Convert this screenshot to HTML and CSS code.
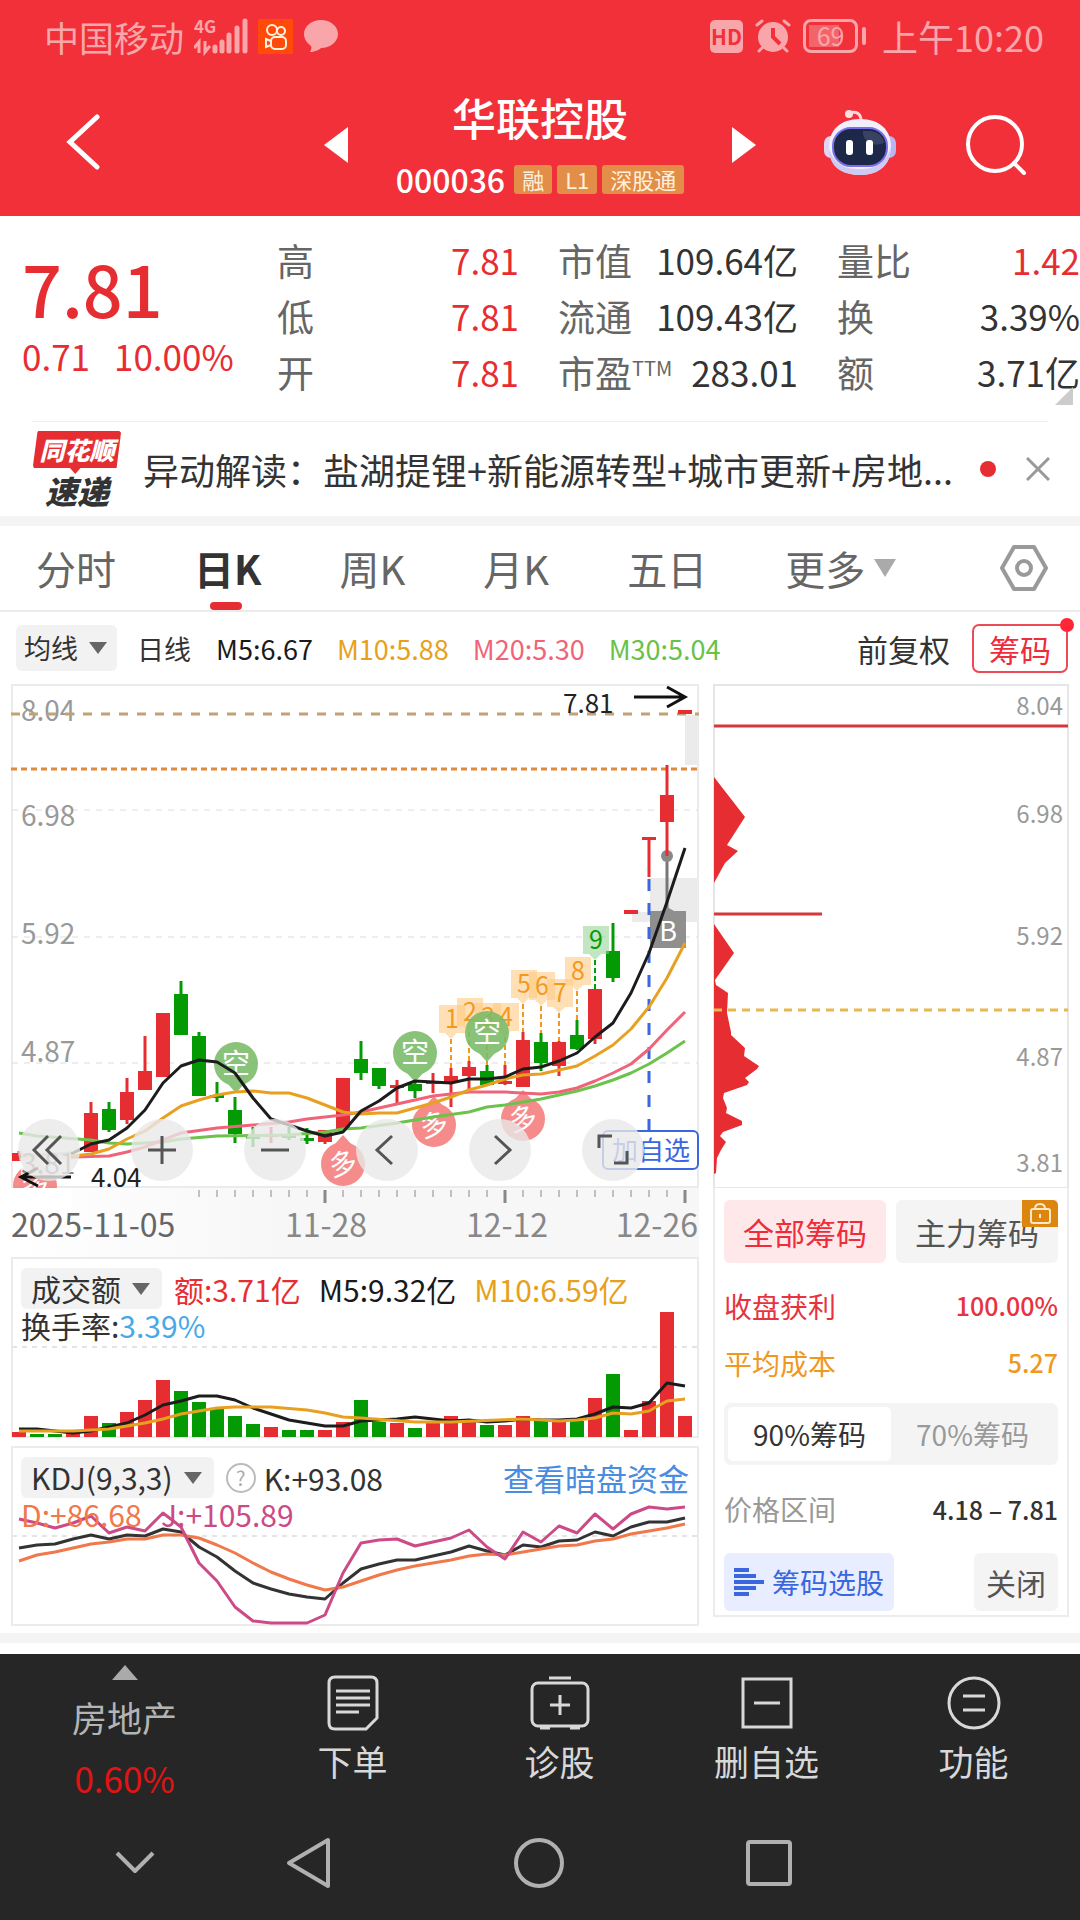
FILE: index.html
```html
<!DOCTYPE html>
<html lang="zh-CN">
  <head>
    <meta charset="UTF-8" />
    <meta name="viewport" content="width=device-width, initial-scale=1.0" />
    <title>华联控股 000036</title>
    <link rel="stylesheet" href="styles.css">
  </head>
  <body>
    <!-- Status bar -->
    <div class="status">
      <div class="status-side">
        <span>中国移动</span>
        <svg class="signal" viewBox="192 10 54 54" width="54" height="54">
          <text x="192" y="34" font-size="17" font-weight="700">4G</text>
          <path d="M197 54V43l-5 6M203 42v11l5-6" stroke-width="3" />
          <path d="M213 52v-4M220 52V43M227 52V36M235 52V29M243 52V22" stroke-width="5" stroke-linecap="round" />
        </svg>
        <svg viewBox="0 0 35 35" width="35" height="35">
          <path fill="#ff4a0a" d="M0 0h35v35H0z" />
          <g fill="none" stroke="#fff3dc" stroke-width="2">
            <circle cx="14" cy="11" r="5" /><circle cx="23" cy="12" r="4" />
            <rect x="13" y="18" width="15" height="12" rx="4" /><path d="M13 22l-5-2v8l5-2z" />
          </g>
        </svg>
        <svg viewBox="0 0 36 34" width="36" height="34">
          <path class="pale" d="M18 1c9 0 17 6 17 14s-8 14-17 14c-2 2-7 4-11 4 1-2 2-4 1-6-4-3-7-7-7-12C1 7 9 1 18 1z" />
        </svg>
      </div>
      <div class="status-side right">
        <span class="hd">HD</span>
        <svg viewBox="0 0 36 34" width="36" height="34">
          <g class="pale-line" fill="none" stroke-width="3" stroke-linecap="round">
            <path d="M2 6l5-4M34 6l-5-4M7 29l-3 3M29 29l3 3" />
          </g>
          <circle class="pale" cx="18" cy="18" r="15" />
          <path d="M18 9v9l7 7" fill="none" stroke="#f13039" stroke-width="4" />
        </svg>
        <span class="battery">69</span>
        <span class="clock">上午10:20</span>
      </div>
    </div>

    <!-- Title bar -->
    <div class="header">
      <button class="icon-btn back" aria-label="返回">
        <svg viewBox="0 0 34 56" width="34" height="56"><path d="M31 3L4 28l27 25" fill="none" stroke="#fff" stroke-width="5" stroke-linecap="round" /></svg>
      </button>
      <div class="stock-nav">
        <button class="icon-btn" aria-label="上一只"><svg viewBox="0 0 24 36" width="24" height="36"><path d="M24 0v36L0 18z" fill="#fff" /></svg></button>
        <div class="stock">
          <h1>华联控股</h1>
          <div class="stock-code">
            <span class="code">000036</span>
            <span class="tag">融</span>
            <span class="tag">L1</span>
            <span class="tag">深股通</span>
          </div>
        </div>
        <button class="icon-btn" aria-label="下一只"><svg viewBox="0 0 24 36" width="24" height="36"><path d="M0 0v36l24-18z" fill="#fff" /></svg></button>
      </div>
      <div class="header-right">
        <button class="icon-btn robot" aria-label="智能助手">
          <svg viewBox="0 0 74 70" width="74" height="70">
            <path d="M26 6q12-3 12 8" fill="none" stroke="#ffd6dc" stroke-width="3" />
            <circle cx="26" cy="7" r="4" fill="#ffdfe4" />
            <rect x="1" y="29" width="14" height="22" rx="7" fill="#dcd8f4" />
            <rect x="59" y="29" width="14" height="22" rx="7" fill="#b9b5f0" />
            <path d="M37 12c20 0 31 11 31 28S56 68 37 68 6 57 6 40s11-28 31-28z" fill="#f1effb" />
            <path d="M6 42c0 17 12 26 31 26s31-10 31-28c-6 18-16 22-31 22S12 58 6 42z" fill="#cfcaf3" />
            <rect x="10" y="21" width="54" height="38" rx="18" fill="#1d2748" stroke="#7b6fe8" stroke-width="2" />
            <path d="M40 24h8q12 2 13 12-10 4-16-1t-5-11z" fill="#3a4263" />
            <rect x="23" y="33" width="7" height="15" rx="3" fill="#fff" />
            <rect x="43" y="33" width="7" height="15" rx="3" fill="#fff" />
          </svg>
        </button>
        <button class="icon-btn" aria-label="搜索">
          <svg viewBox="0 0 62 62" width="62" height="62"><g fill="none" stroke="#fff" stroke-width="4" stroke-linecap="round"><circle cx="30" cy="30" r="27" /><path d="M49 49l10 10" /></g></svg>
        </button>
      </div>
    </div>

    <!-- Quote -->
    <div class="quote">
      <div class="price">
        <div class="price-now">7.81</div>
        <div class="price-change"><span>0.71</span><span>10.00%</span></div>
      </div>
      <dl class="stats">
        <div><dt>高</dt><dd class="up">7.81</dd></div>
        <div><dt>低</dt><dd class="up">7.81</dd></div>
        <div><dt>开</dt><dd class="up">7.81</dd></div>
      </dl>
      <dl class="stats">
        <div><dt>市值</dt><dd>109.64亿</dd></div>
        <div><dt>流通</dt><dd>109.43亿</dd></div>
        <div><dt>市盈<sup>TTM</sup></dt><dd>283.01</dd></div>
      </dl>
      <dl class="stats">
        <div><dt>量比</dt><dd class="up">1.42</dd></div>
        <div><dt>换</dt><dd>3.39%</dd></div>
        <div><dt>额</dt><dd>3.71亿</dd></div>
      </dl>
      <svg class="corner" viewBox="0 0 18 18" width="18" height="18"><path d="M18 0v18H0z" fill="#ccc" /></svg>
    </div>

    <!-- News line -->
    <div class="news">
      <div class="news-logo">
        <span class="logo-top">同花顺</span>
        <span class="logo-bottom">速递</span>
      </div>
      <a class="news-text" href="#">异动解读：盐湖提锂+新能源转型+城市更新+房地...</a>
      <span class="news-dot"></span>
      <button class="icon-btn" aria-label="关闭提示">
        <svg viewBox="0 0 24 24" width="24" height="24"><path d="M1 1l22 22M23 1L1 23" stroke="#999" stroke-width="3" /></svg>
      </button>
    </div>

    <!-- Period tabs -->
    <div class="tabs">
      <button class="tab">分时</button>
      <button class="tab active">日K</button>
      <button class="tab">周K</button>
      <button class="tab">月K</button>
      <button class="tab">五日</button>
      <button class="tab more">更多<svg viewBox="0 0 24 20" width="24" height="20"><path d="M1 1h22L12 19z" fill="#aaa" /></svg></button>
      <button class="icon-btn settings" aria-label="设置">
        <svg viewBox="0 0 48 48" width="48" height="48"><g fill="none" stroke="#999" stroke-width="4"><path d="M14 3h20l12 21-12 21H14L2 24z" stroke-linejoin="round" /><circle cx="24" cy="24" r="7" /></g></svg>
      </button>
    </div>

    <div class="averages">
      <button class="pick">均线<i class="caret"></i></button>
      <span class="period">日线</span>
      <span class="m5">M5:6.67</span>
      <span class="m10">M10:5.88</span>
      <span class="m20">M20:5.30</span>
      <span class="m30">M30:5.04</span>
      <button class="adjust">前复权</button>
      <button class="chip-btn">筹码</button>
    </div>

    <!-- Charts -->
    <div class="charts">
      <div class="left">
        <div class="kline">
          <svg id="kline" viewBox="11 684 688 573" role="img" aria-label="日K线图"></svg>
          <div class="tools">
            <button aria-label="最早"><svg viewBox="0 0 62 62"><path d="M30 17L16 31l14 14M43 17L29 31l14 14" /></svg></button>
            <button aria-label="放大"><svg viewBox="0 0 62 62"><path d="M17 31h28M31 17v28" /></svg></button>
            <button aria-label="缩小"><svg viewBox="0 0 62 62"><path d="M17 31h28" /></svg></button>
            <button aria-label="左移"><svg viewBox="0 0 62 62"><path d="M36 17L21 31l15 14" /></svg></button>
            <button aria-label="右移"><svg viewBox="0 0 62 62"><path d="M26 17l15 14-15 14" /></svg></button>
            <button aria-label="全屏"><svg viewBox="0 0 62 62"><path d="M17 29V17h13M45 32v12H32" /></svg></button>
          </div>
        </div>
        <div class="sub">
          <svg id="volume" viewBox="11 1257 688 181" role="img" aria-label="成交额"></svg>
          <div class="legend">
            <div class="legend-row">
              <button class="pick">成交额<i class="caret"></i></button>
              <span class="up">额:3.71亿</span>
              <span class="m5">M5:9.32亿</span>
              <span class="m10">M10:6.59亿</span>
            </div>
            <div class="legend-row second">换手率:<span class="rate">3.39%</span></div>
          </div>
        </div>
        <div class="sub">
          <svg id="kdj" viewBox="11 1446 688 181" role="img" aria-label="KDJ"></svg>
          <div class="legend">
            <div class="legend-row">
              <button class="pick">KDJ(9,3,3)<i class="caret"></i></button>
              <button class="help" aria-label="指标说明">?</button>
              <span>K:+93.08</span>
              <a class="link" href="#">查看暗盘资金</a>
            </div>
            <div class="legend-row second"><span class="d">D:+86.68</span><span class="j">J:+105.89</span></div>
          </div>
        </div>
      </div>

      <div class="right-panel">
        <svg id="chips" viewBox="713 684 356 504" role="img" aria-label="筹码分布"></svg>
        <div class="chip-info">
          <div class="chip-tabs">
            <button class="on">全部筹码</button>
            <button>主力筹码
              <span class="lock"><svg viewBox="0 0 36 27" width="36" height="27"><g fill="none" stroke="#ffe9c4" stroke-width="2"><rect x="9" y="9" width="19" height="14" rx="2" /><path d="M13 9q0-5 5-5t5 5M18 14v4" /></g></svg></span>
            </button>
          </div>
          <div class="chip-row red"><span>收盘获利</span><b>100.00%</b></div>
          <div class="chip-row orange"><span>平均成本</span><b>5.27</b></div>
          <div class="segment">
            <button class="on">90%筹码</button>
            <button>70%筹码</button>
          </div>
          <div class="chip-row range"><span>价格区间</span><b>4.18 – 7.81</b></div>
          <div class="chip-actions">
            <button class="select"><svg viewBox="0 0 30 30" width="30" height="30"><path d="M0 3h15M0 9h22M0 15h30M0 21h22M0 27h15" stroke="#3a66e0" stroke-width="4" /></svg>筹码选股</button>
            <button class="close">关闭</button>
          </div>
        </div>
      </div>
    </div>

    <!-- Bottom bar -->
    <div class="bottom">
      <div class="actions">
        <button class="sector">
          <svg viewBox="0 0 26 15" width="26" height="15"><path d="M13 0l13 15H0z" fill="#aaa" /></svg>
          <span>房地产</span>
          <span class="sector-rate">0.60%</span>
        </button>
        <button>
          <svg viewBox="0 0 60 56"><path d="M12 2h36q6 0 6 6v35L43 54H12q-6 0-6-6V8q0-6 6-6zM13 16h34M13 23h34M13 30h34M13 37h23" /></svg>
          <span>下单</span>
        </button>
        <button>
          <svg viewBox="0 0 60 56"><path d="M19 3h22" /><rect x="2" y="8" width="56" height="43" rx="6" /><path d="M30 20v20M20 30h20M10 53h10M40 53h10" /></svg>
          <span>诊股</span>
        </button>
        <button>
          <svg viewBox="0 0 60 56"><path d="M6 4h48v48H6zM17 28h26" /></svg>
          <span>删自选</span>
        </button>
        <button>
          <svg viewBox="0 0 60 56"><circle cx="30" cy="28" r="25" /><path d="M19 21h22M19 35h22" /></svg>
          <span>功能</span>
        </button>
      </div>
      <div class="system-nav">
        <button class="collapse" aria-label="收起"><svg viewBox="0 0 40 24" width="40" height="24"><path d="M2 2l18 18L38 2" /></svg></button>
        <button class="sys-back" aria-label="系统返回"><svg viewBox="0 0 46 52" width="46" height="52"><path d="M42 3v46L3 26z" /></svg></button>
        <button aria-label="主页"><svg viewBox="0 0 52 52" width="52" height="52"><circle cx="26" cy="26" r="23" /></svg></button>
        <button aria-label="最近任务"><svg viewBox="0 0 46 46" width="46" height="46"><rect x="2" y="2" width="42" height="42" rx="2" /></svg></button>
      </div>
    </div>

    <script src="charts.js"></script>
  </body>
</html>
```

FILE: styles.css
```css
* {
  box-sizing: border-box;
}
body {
  margin: 0;
  min-height: 100vh;
  display: flex;
  flex-direction: column;
  background-color: #ffffff;
  color: #333333;
  font-family: "Noto Sans CJK SC", "Noto Sans", sans-serif;
  font-size: 28px;
  line-height: 1;
}
button {
  border: none;
  padding: 0;
  background: none;
  color: inherit;
  font: inherit;
  cursor: pointer;
}
a {
  color: inherit;
  text-decoration: none;
}
svg {
  display: block;
}
svg text {
  font-family: "Noto Sans CJK SC", sans-serif;
}
.up {
  color: #e62e32;
}
.m5 {
  color: #1a1a1a;
}
.m10 {
  color: #e6a11c;
}
.m20 {
  color: #f0647a;
}
.m30 {
  color: #68c24a;
}

/* Status bar */
.status {
  height: 74px;
  padding: 0 36px 2px 44px;
  display: flex;
  justify-content: space-between;
  align-items: center;
  background-color: #f13039;
  color: #f9a6aa;
  font-size: 35px;
}
.status-side {
  display: flex;
  align-items: center;
  gap: 10px;
}
.pale,
.signal text {
  fill: #f9a6aa;
}
.pale-line,
.signal path {
  stroke: #f9a6aa;
}
.signal path {
  fill: none;
}
.status .right {
  gap: 12px;
}
.hd {
  width: 33px;
  height: 33px;
  border-radius: 5px;
  background-color: #f9a6aa;
  color: #f13039;
  font-size: 21px;
  font-weight: 700;
  line-height: 32px;
  text-align: center;
}
.battery {
  position: relative;
  width: 55px;
  height: 34px;
  border: 3px solid #f9a6aa;
  border-radius: 8px;
  background: linear-gradient(90deg, #f5636a 70%, transparent 70%) 3px 3px / 43px 22px no-repeat;
  font-size: 25px;
  line-height: 27px;
  text-align: center;
}
.battery::after {
  content: "";
  position: absolute;
  right: -11px;
  top: 5px;
  width: 4px;
  height: 18px;
  border-radius: 2px;
  background-color: #f9a6aa;
}
.clock {
  margin-left: 12px;
  font-size: 36px;
}

/* Title bar */
.header {
  height: 142px;
  display: grid;
  grid-template-columns: 1fr auto 1fr;
  align-items: center;
  background-color: #f13039;
  color: #ffffff;
}
.back {
  justify-self: start;
  margin-left: 66px;
  padding-bottom: 6px;
}
.stock-nav {
  display: flex;
  align-items: center;
  gap: 48px;
}
.stock {
  display: flex;
  flex-direction: column;
  align-items: center;
  gap: 20px;
  padding-bottom: 4px;
}
h1 {
  margin: 0;
  font-size: 44px;
  font-weight: 500;
  line-height: 52px;
}
.stock-code {
  display: flex;
  align-items: center;
  gap: 5px;
}
.code {
  margin-right: 4px;
  font-size: 32px;
  font-weight: 500;
}
.tag {
  padding: 0 8px;
  border-radius: 3px;
  background-color: #e28d48;
  color: #fff0dc;
  font-size: 22px;
  line-height: 29px;
}
.header-right {
  display: flex;
  justify-content: flex-end;
  align-items: center;
  gap: 68px;
  padding-right: 53px;
}
.robot {
  padding-bottom: 6px;
}

/* Quote */
.quote {
  position: relative;
  height: 206px;
  padding: 16px 0 0 22px;
  display: grid;
  grid-template-columns: minmax(0, 216fr) minmax(0, 242fr) minmax(0, 240fr) minmax(0, 243fr);
  column-gap: 39px;
}
.quote::after {
  content: "";
  position: absolute;
  left: 32px;
  right: 32px;
  bottom: 0;
  height: 1px;
  background-color: #eeeeee;
}
.price {
  padding-top: 18px;
  color: #e62e32;
  white-space: nowrap;
}
.price-now {
  font-size: 70px;
  font-weight: 500;
  line-height: 76px;
}
.price-change {
  display: flex;
  gap: 24px;
  font-size: 35px;
  line-height: 60px;
}
.stats {
  margin: 0;
  font-size: 37px;
}
.stats div {
  display: flex;
  justify-content: space-between;
  line-height: 56px;
  white-space: nowrap;
}
.stats dt {
  color: #666666;
}
.stats dd {
  margin: 0;
  font-size: 35px;
}
.stats sup {
  font-size: 20px;
  line-height: 1;
  vertical-align: 12px;
}
.corner {
  position: absolute;
  right: 7px;
  bottom: 17px;
}

/* News line */
.news {
  height: 94px;
  padding: 0 30px 0 32px;
  display: flex;
  align-items: center;
}
.news-logo {
  width: 90px;
  margin-right: 21px;
  display: flex;
  flex-direction: column;
  align-items: center;
  font-weight: 900;
  font-style: italic;
}
.logo-top {
  width: 88px;
  height: 43px;
  background-color: #e62e32;
  color: #ffffff;
  font-size: 25px;
  line-height: 36px;
  text-align: center;
  clip-path: polygon(6% 0, 98% 0, 100% 4%, 95% 86%, 54% 86%, 48% 100%, 42% 86%, 1% 86%, 0 80%, 5% 3%);
}
.logo-bottom {
  font-size: 32px;
  line-height: 33px;
}
.news-text {
  flex: 1;
  font-size: 36px;
  line-height: 52px;
  white-space: nowrap;
}
.news-dot {
  width: 16px;
  height: 16px;
  margin: 0 30px 0 18px;
  border-radius: 50%;
  background-color: #e62e32;
}

/* Period tabs */
.tabs {
  height: 96px;
  padding: 0 32px 0 36px;
  display: flex;
  align-items: stretch;
  gap: 78px;
  border-top: 10px solid #f4f4f4;
  border-bottom: 2px solid #ececec;
}
.tab {
  position: relative;
  color: #666666;
  font-size: 40px;
  line-height: 84px;
  white-space: nowrap;
}
.tab.active {
  color: #333333;
  font-weight: 700;
}
.tab.active::after {
  content: "";
  position: absolute;
  left: 50%;
  bottom: 0;
  width: 32px;
  height: 8px;
  margin-left: -18px;
  border-radius: 4px;
  background-color: #e62e32;
}
.more {
  display: flex;
  align-items: center;
  gap: 8px;
}
.settings {
  margin-left: auto;
}

/* Moving averages */
.averages {
  height: 72px;
  padding: 0 12px 0 16px;
  display: flex;
  align-items: center;
  font-size: 27px;
  white-space: nowrap;
}
.pick {
  display: flex;
  align-items: center;
  gap: 11px;
  padding: 0 10px 0 8px;
  border-radius: 6px;
  background-color: #f2f2f2;
  line-height: 46px;
}
.caret {
  border: 9px solid transparent;
  border-top: 12px solid #666666;
  border-bottom: 0;
}
.averages .period {
  margin: 0 25px 0 20px;
}
.averages .m5,
.averages .m10,
.averages .m20 {
  margin-right: 24px;
}
.adjust {
  margin-left: auto;
  font-size: 31px;
}
.chip-btn {
  position: relative;
  width: 96px;
  margin-left: 22px;
  border: 2px solid #ec4a55;
  border-radius: 7px;
  color: #ee2c3a;
  font-size: 31px;
  line-height: 45px;
}
.chip-btn::after {
  content: "";
  position: absolute;
  right: -8px;
  top: -8px;
  width: 14px;
  height: 14px;
  border-radius: 50%;
  background-color: #ff2638;
}

/* Charts */
.charts {
  padding: 0 11px;
  display: grid;
  grid-template-columns: 688fr 356fr;
  align-items: start;
  gap: 14px;
}
.charts > div > svg,
.kline > svg,
.sub > svg {
  width: 100%;
  height: auto;
}
.left {
  display: flex;
  flex-direction: column;
}
.kline {
  position: relative;
}
.tools {
  position: absolute;
  left: 1%;
  right: 8%;
  top: 76%;
  display: flex;
  justify-content: space-between;
}
.tools button {
  width: 62px;
  height: 62px;
  border-radius: 50%;
  background-color: rgba(232, 232, 232, 0.8);
}
.tools path {
  fill: none;
  stroke: #555555;
  stroke-width: 3;
}
.sub {
  display: grid;
}
.sub > * {
  grid-area: 1 / 1;
}
.sub + .sub {
  margin-top: 8px;
}
.legend {
  padding: 11px 10px 0;
  font-size: 30px;
}
.legend-row {
  display: flex;
  align-items: center;
  height: 41px;
  gap: 18px;
  white-space: nowrap;
}
.legend .pick {
  margin-right: -6px;
  padding: 0 12px 0 10px;
  line-height: 41px;
}
.legend-row.second {
  height: 32px;
  gap: 0;
}
.help {
  width: 30px;
  height: 30px;
  margin-right: -10px;
  border: 2px solid #bbbbbb;
  border-radius: 50%;
  color: #aaaaaa;
  font-size: 20px;
}
.rate {
  color: #48a8e8;
}
.link {
  margin-left: auto;
  color: #4a8ce0;
  font-size: 31px;
}
.d {
  width: 140px;
  color: #f0784a;
}
.j {
  color: #cc4a86;
}

/* Chip distribution */
.chip-info {
  padding: 12px 9px 4px;
  border: 2px solid #ececec;
  border-top: none;
}
.chip-tabs {
  display: flex;
  gap: 10px;
}
.chip-tabs button {
  position: relative;
  flex: 1;
  border-radius: 6px;
  background-color: #f4f4f4;
  color: #555555;
  font-size: 31px;
  line-height: 63px;
}
.chip-tabs .on {
  background-color: #ffe8ea;
  color: #ee2c3a;
}
.lock {
  position: absolute;
  right: 0;
  top: 0;
  border-radius: 0 5px 0 0;
  background-color: #dc860f;
}
.chip-row {
  display: flex;
  justify-content: space-between;
  align-items: center;
  height: 57px;
}
.chip-tabs + .chip-row {
  margin-top: 14px;
}
.chip-row b {
  font-size: 25px;
  font-weight: 500;
}
.red {
  color: #e8323e;
}
.orange {
  color: #f0981e;
}
.segment {
  display: flex;
  margin-top: 12px;
  padding: 4px;
  border-radius: 7px;
  background-color: #f4f4f4;
}
.segment button {
  flex: 1;
  border-radius: 5px;
  color: #999999;
  line-height: 54px;
}
.segment .on {
  background-color: #ffffff;
  color: #333333;
}
.range {
  height: 88px;
}
.range span {
  color: #999999;
}
.chip-actions {
  display: flex;
  justify-content: space-between;
  line-height: 58px;
}
.select {
  display: flex;
  align-items: center;
  gap: 8px;
  padding: 0 10px;
  border-radius: 6px;
  background-color: #e8eeff;
  color: #3a66e0;
}
.close {
  padding: 0 12px;
  border-radius: 6px;
  background-color: #f4f4f4;
  color: #555555;
  font-size: 30px;
}

/* Bottom bar */
.bottom {
  flex: 1;
  margin-top: 6px;
  border-top: 10px solid #f4f4f4;
  display: flex;
  flex-direction: column;
  color: #d8d8d8;
}
.actions {
  margin-top: 11px;
  height: 150px;
  display: grid;
  grid-template-columns: 249fr repeat(4, 207fr);
  padding-right: 3px;
  background-color: #262626;
  font-size: 35px;
}
.actions button {
  display: flex;
  flex-direction: column;
  align-items: center;
  gap: 8px;
  padding-top: 21px;
  line-height: 44px;
}
.actions button > svg {
  width: 60px;
  height: 56px;
  fill: none;
  stroke: #d8d8d8;
  stroke-width: 3;
}
.actions .sector {
  gap: 15px;
  padding-top: 11px;
  color: #b4b4b4;
}
.actions .sector > svg {
  width: 26px;
  height: 15px;
  stroke: none;
}
.sector .sector-rate {
  margin-top: 2px;
  color: #e01414;
}
.system-nav {
  flex: 1;
  display: grid;
  grid-template-columns: 155fr 39fr repeat(3, 230fr) 196fr;
  align-items: center;
  justify-items: center;
  padding-top: 2px;
  background-color: #262626;
}
.system-nav path,
.system-nav circle,
.system-nav rect {
  fill: none;
  stroke: #b0b0b0;
  stroke-width: 4;
  stroke-linejoin: round;
}
.collapse {
  justify-self: end;
}
.sys-back {
  grid-column: 3;
}
```

FILE: charts.js
```js
const RED = "#e62e32";
const GREEN = "#049a04";
const STEP = 18;
const FIRST = 19;

const xAt = (i) => FIRST + i * STEP;
const rect = (x, y, w, h, fill, extra = "") =>
  `<rect x="${x}" y="${y}" width="${w}" height="${h}" fill="${fill}" ${extra}/>`;
const line = (x1, y1, x2, y2, stroke, w = 2, extra = "") =>
  `<line x1="${x1}" y1="${y1}" x2="${x2}" y2="${y2}" stroke="${stroke}" stroke-width="${w}" ${extra}/>`;
const text = (x, y, size, fill, str, extra = "") =>
  `<text x="${x}" y="${y}" font-size="${size}" fill="${fill}" ${extra}>${str}</text>`;

// points are [index, y] pairs, or plain y values, one for each day
function curve(points, color) {
  const d = points
    .map((p, i) => (Array.isArray(p) ? `${xAt(p[0])},${p[1]}` : `${xAt(i)},${p}`))
    .join(" ");
  return `<polyline points="${d}" fill="none" stroke="${color}" stroke-width="3" stroke-linejoin="round"/>`;
}

// [day, color, high, body top, body bottom, low]
const candles = [
  [0, RED, 1151, 1153, 1161, 1161],
  [4, RED, 1102, 1113, 1152, 1152],
  [5, GREEN, 1102, 1109, 1130, 1132],
  [6, RED, 1078, 1092, 1120, 1124],
  [7, RED, 1036, 1071, 1090, 1090],
  [8, RED, 1013, 1013, 1077, 1077],
  [9, GREEN, 981, 994, 1035, 1035],
  [10, GREEN, 1032, 1036, 1096, 1096],
  [11, GREEN, 1082, 1095, 1098, 1102],
  [12, GREEN, 1097, 1110, 1134, 1143],
  [13, GREEN, 1127, 1136, 1139, 1147],
  [14, RED, 1127, 1134, 1137, 1143],
  [15, GREEN, 1127, 1134, 1138, 1140],
  [16, GREEN, 1128, 1138, 1141, 1144],
  [17, RED, 1130, 1130, 1142, 1144],
  [18, RED, 1078, 1078, 1129, 1129],
  [19, GREEN, 1041, 1059, 1073, 1080],
  [20, GREEN, 1068, 1068, 1086, 1089],
  [21, RED, 1080, 1085, 1088, 1103],
  [22, GREEN, 1081, 1084, 1091, 1098],
  [23, RED, 1073, 1081, 1084, 1093],
  [24, RED, 1068, 1076, 1083, 1107],
  [25, RED, 1061, 1067, 1076, 1089],
  [26, GREEN, 1065, 1071, 1085, 1085],
  [27, RED, 1065, 1081, 1084, 1085],
  [28, RED, 1032, 1040, 1087, 1087],
  [29, GREEN, 1033, 1042, 1063, 1071],
  [30, RED, 1041, 1042, 1066, 1076],
  [31, GREEN, 1020, 1035, 1049, 1050],
  [32, RED, 989, 989, 1039, 1044],
  [33, GREEN, 923, 951, 978, 982],
  [34, RED, 910, 910, 914, 914],
  [35, RED, 837, 837, 840, 877],
  [36, RED, 765, 795, 822, 856],
  [37, RED, 710, 710, 714, 714],
];

const ma5 = [1157, 1155, 1154, 1153, 1144, 1140, 1128, 1110, 1083, 1066, 1060, 1062, 1073, 1098,
  1119, 1125, 1131, 1136, 1132, 1111, 1101, 1088, 1081, 1082, 1083, 1079, 1079, 1077, 1069, 1067,
  1061, 1053, 1037, 1023, 993, 953, 902, 848];
const ma10 = [1158, 1158, 1157, 1156, 1154, 1149, 1139, 1131, 1118, 1106, 1100, 1095, 1092, 1091,
  1093, 1093, 1098, 1105, 1112, 1114, 1113, 1113, 1108, 1103, 1097, 1090, 1085, 1079, 1075, 1074,
  1070, 1066, 1056, 1045, 1029, 1007, 978, 943];
const ma20 = [[0, 1159], [3, 1157], [5, 1156], [6, 1152], [7, 1147], [8, 1140], [9, 1133], [11, 1128],
  [13, 1125], [15, 1122], [16, 1119], [18, 1115], [19, 1112], [21, 1104], [22, 1100], [23, 1096],
  [25, 1092], [27, 1092], [29, 1094], [30, 1092], [31, 1088], [32, 1081], [33, 1073], [34, 1064],
  [35, 1049], [36, 1030], [37, 1012]];
const ma30 = [[0, 1133], [1, 1136], [4, 1140], [5, 1143], [6, 1144], [8, 1142], [9, 1139], [11, 1136],
  [15, 1135], [17, 1132], [18, 1129], [19, 1128], [21, 1123], [23, 1117], [25, 1112], [26, 1107],
  [27, 1105], [28, 1102], [29, 1099], [30, 1095], [31, 1091], [32, 1086], [33, 1080], [34, 1073],
  [35, 1064], [36, 1053], [37, 1041]];

function pin(x, y, up) {
  const color = up ? "#f47c7a" : "#79bb68";
  const tip = up ? `M${x - 9} ${y - 19}l9-10 9 10z` : `M${x - 9} ${y + 19}l9 10 9-10z`;
  const word = up
    ? text(x, y + 10, 28, "#fff", "多", `text-anchor="middle" transform="rotate(-14 ${x} ${y})"`)
    : text(x, y + 10, 28, "#fff", "空", 'text-anchor="middle"');
  return `<g opacity="0.88"><circle cx="${x}" cy="${y}" r="22" fill="${color}"/><path d="${tip}" fill="${color}"/>${word}</g>`;
}

// numbered setup tags, with a dashed leg down to the candle
function setup(n, day, top, legEnd) {
  const x = xAt(day) + 1;
  const last = n === 9;
  const fill = last ? "#8fd28f" : "#ffc67a";
  const ink = last ? "#089a08" : "#f39a1e";
  return (
    line(x - 1, top + 34, x - 1, legEnd, ink, 2, 'stroke-dasharray="5 3"') +
    `<path d="M${x - 13} ${top}h26v28h-8l-6 6-6-6h-6z" fill="${fill}" opacity="0.55"/>` +
    text(x, top + 23, 25, ink, n, 'text-anchor="middle"')
  );
}

function drawKline() {
  let out = `<defs><linearGradient id="axis" x1="0" x2="1"><stop offset="0" stop-color="#fff"/><stop offset="0.4" stop-color="#f7f7f7"/><stop offset="1" stop-color="#f7f7f7"/></linearGradient></defs>`;
  out += rect(11, 1188, 688, 69, "url(#axis)");
  out += rect(12, 685, 686, 502, "none", 'stroke="#ebebeb" stroke-width="2"');
  [810, 937, 1063].forEach((y) => {
    out += line(12, y, 698, y, "#dddddd", 1, 'stroke-dasharray="6 6"');
  });
  [["8.04", 721], ["6.98", 826], ["5.92", 944], ["4.87", 1062]].forEach(([s, y]) => {
    out += text(21, y, 28, "#999", s);
  });
  out += rect(685, 715, 13, 50, "#ebebeb") + rect(650, 878, 48, 44, "#ebebeb") + rect(632, 912, 18, 10, "#ebebeb");
  out += line(11, 714, 699, 714, "#c4a173", 3, 'stroke-dasharray="9 9"');
  out += line(11, 769, 699, 769, "#e08a3a", 3, 'stroke-dasharray="6 4"');

  out += line(xAt(36), 856, xAt(36), 912, "#777", 3);
  out += `<circle cx="667" cy="856" r="6" fill="#888"/>`;
  out += `<path d="M650 911h11l6-4 7 4h12v37h-36z" fill="#8f8f8f"/>` + text(668, 941, 27, "#fff", "B", 'text-anchor="middle"');
  out += line(649, 879, 649, 1131, "#3a66e0", 3, 'stroke-dasharray="12 12"');

  out += pin(35, 1186, true) + pin(343, 1164, true) + pin(434, 1125, true) + pin(523, 1119, true);
  out += rect(11, 1188, 60, 30, "#fff");
  out += pin(236, 1064, false) + pin(415, 1053, false);
  candles.forEach(([i, color, high, top, bottom, low]) => {
    out += line(xAt(i), high, xAt(i), low, color, 3);
    out += rect(xAt(i) - 7, top, 14, bottom - top, color);
  });
  out += setup(1, 24, 1005, 1068) + setup(2, 25, 998, 1061) + setup(3, 26, 1003, 1065) + setup(4, 27, 1003, 1065);
  out += setup(5, 28, 970, 1032) + setup(6, 29, 972, 1033) + setup(7, 30, 979, 1041) + setup(8, 31, 957, 1020);
  out += setup(9, 32, 926, 989);
  out += pin(487, 1033, false);
  out += curve(ma30, "#6cc24c") + curve(ma20, "#f0647a") + curve(ma10, "#e8a020") + curve(ma5, "#1c1c1c");

  // lowest axis label sits over the pin, under the tool buttons
  out += rect(21, 1151, 50, 24, "#fff", 'opacity="0.8"') + text(21, 1174, 28, "#888", "3.81");
  out += text(563, 713, 26, "#222", "7.81") + `<path d="M634 697h50M667 687l18 10-18 10" fill="none" stroke="#111" stroke-width="3"/>`;
  out += text(91, 1187, 26, "#222", "4.04") + `<path d="M71 1177H21M38 1186l-17-9 17-9" fill="none" stroke="#111" stroke-width="3"/>`;
  out += rect(603, 1131, 95, 38, "#fff", 'rx="5" stroke="#3a66e0" stroke-width="2"');
  out += text(612, 1160, 26, "#3a66e0", "加自选");

  for (let i = 10; i < 38; i++) {
    const major = i === 17 || i === 27 || i === 37;
    out += line(xAt(i), 1190, xAt(i), major ? 1203 : 1197, "#888", major ? 3 : 1);
  }
  out += text(11, 1237, 32, "#666", "2025-11-05") + text(326, 1237, 32, "#888", "11-28", 'text-anchor="middle"');
  out += text(507, 1237, 32, "#888", "12-12", 'text-anchor="middle"') + text(698, 1237, 32, "#888", "12-26", 'text-anchor="end"');
  document.getElementById("kline").innerHTML = out;
}

const volumeTops = [1432, 1434, 1434, 1432, 1416, 1423, 1412, 1400, 1380, 1391, 1402, 1409, 1416,
  1424, 1427, 1430, 1430, 1430, 1422, 1400, 1422, 1423, 1428, 1423, 1416, 1421, 1425, 1425, 1416,
  1421, 1421, 1421, 1398, 1374, 1430, 1401, 1312, 1416];
const volumeGreen = [1, 2, 5, 9, 10, 11, 12, 13, 15, 16, 19, 20, 22, 26, 29, 31, 33];
const volume5 = [1429, 1429, 1431, 1433, 1431, 1427, 1423, 1415, 1405, 1401, 1396, 1396, 1400, 1408,
  1414, 1420, 1423, 1426, 1426, 1421, 1420, 1419, 1417, 1419, 1421, 1420, 1422, 1421, 1419, 1420,
  1420, 1419, 1414, 1407, 1408, 1403, 1383, 1386];
const volume10 = [[0, 1431], [3, 1431], [5, 1429], [7, 1423], [8, 1419], [9, 1414], [10, 1411],
  [11, 1408], [12, 1407], [14, 1407], [16, 1410], [17, 1413], [18, 1417], [19, 1418], [22, 1422],
  [24, 1422], [28, 1419], [30, 1421], [31, 1420], [32, 1418], [33, 1413], [34, 1414], [35, 1411],
  [36, 1401], [37, 1399]];

function drawVolume() {
  let out = rect(12, 1258, 686, 179, "none", 'stroke="#ebebeb" stroke-width="2"');
  out += line(12, 1347, 698, 1347, "#e4e4e4", 2, 'stroke-dasharray="5 5"');
  volumeTops.forEach((y, i) => {
    out += rect(xAt(i) - 7, y, 14, 1437 - y, volumeGreen.includes(i) ? GREEN : RED);
  });
  out += curve(volume5, "#1c1c1c") + curve(volume10, "#e8a020");
  document.getElementById("volume").innerHTML = out;
}

const kLine = [1548, 1545, 1544, 1539, 1535, 1539, 1535, 1536, 1529, 1532, 1547, 1557, 1571, 1583,
  1589, 1594, 1597, 1599, 1583, 1569, 1564, 1560, 1560, 1556, 1552, 1546, 1551, 1555, 1545, 1547,
  1541, 1540, 1532, 1536, 1527, 1522, 1522, 1518];
const dLine = [1561, 1555, 1552, 1548, 1544, 1542, 1539, 1539, 1535, 1535, 1538, 1545, 1553, 1563,
  1572, 1579, 1585, 1590, 1587, 1581, 1575, 1570, 1566, 1563, 1560, 1556, 1554, 1555, 1552, 1549,
  1546, 1545, 1541, 1539, 1534, 1531, 1528, 1524];
const jLine = [1519, 1523, 1528, 1523, 1516, 1533, 1527, 1531, 1513, 1527, 1563, 1581, 1607, 1621,
  1623, 1623, 1623, 1615, 1573, 1543, 1540, 1539, 1546, 1542, 1538, 1530, 1547, 1559, 1532, 1542,
  1526, 1533, 1514, 1529, 1514, 1507, 1509, 1507];

function drawKdj() {
  let out = rect(12, 1447, 686, 178, "none", 'stroke="#ebebeb" stroke-width="2"');
  out += line(12, 1536, 698, 1536, "#e4e4e4", 2, 'stroke-dasharray="5 5"');
  out += curve(kLine, "#333") + curve(dLine, "#f0784a") + curve(jLine, "#cc4a86");
  document.getElementById("kdj").innerHTML = out;
}

function drawChips() {
  let out = rect(714, 685, 354, 503, "none", 'stroke="#e6e6e6" stroke-width="2"');
  out += `<path fill="${RED}" d="M714 777L745 817 727 845 738 851 725 863 714 883z"/>`;
  out += `<path fill="${RED}" d="M714 924L734 953 715 980 716 985 728 993 727 1013 731 1032 731 1035 745 1048 744 1056 759 1066 757 1069 745 1078 749 1082 747 1085 724 1093 723 1098 727 1108 726 1113 742 1121 742 1125 723 1132 720 1136 726 1142 721 1150 717 1158 716 1173 714 1174z"/>`;
  out += line(714, 726, 1068, 726, "#d4383c", 3) + line(714, 914, 822, 914, "#d4383c", 3);
  out += line(714, 1010, 1068, 1010, "#e6b84e", 3, 'stroke-dasharray="8 6"');
  [["8.04", 715], ["6.98", 823], ["5.92", 945], ["4.87", 1066], ["3.81", 1172]].forEach(([s, y]) => {
    out += text(1063, y, 24, "#999", s, 'text-anchor="end"');
  });
  document.getElementById("chips").innerHTML = out;
}

drawKline();
drawVolume();
drawKdj();
drawChips();
```
